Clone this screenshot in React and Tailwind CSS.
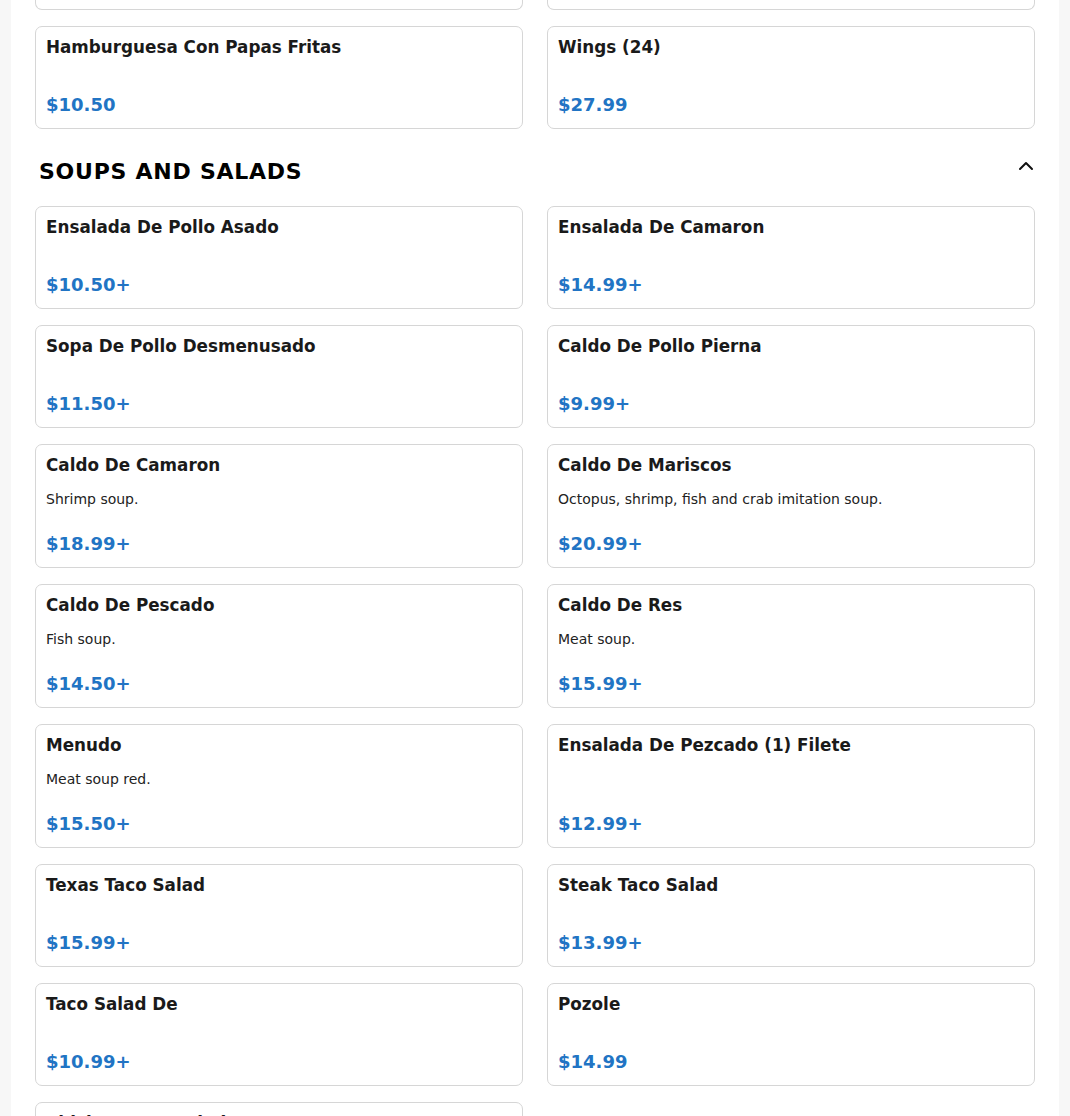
import React from "react";

const FONT = { fontFamily: '"DejaVu Sans", "Liberation Sans", sans-serif' };

const soups = [
  { name: "Ensalada De Pollo Asado", price: "$10.50+" },
  { name: "Ensalada De Camaron", price: "$14.99+" },
  { name: "Sopa De Pollo Desmenusado", price: "$11.50+" },
  { name: "Caldo De Pollo Pierna", price: "$9.99+" },
  { name: "Caldo De Camaron", desc: "Shrimp soup.", price: "$18.99+" },
  { name: "Caldo De Mariscos", desc: "Octopus, shrimp, fish and crab imitation soup.", price: "$20.99+" },
  { name: "Caldo De Pescado", desc: "Fish soup.", price: "$14.50+" },
  { name: "Caldo De Res", desc: "Meat soup.", price: "$15.99+" },
  { name: "Menudo", desc: "Meat soup red.", price: "$15.50+" },
  { name: "Ensalada De Pezcado (1) Filete", price: "$12.99+" },
  { name: "Texas Taco Salad", price: "$15.99+" },
  { name: "Steak Taco Salad", price: "$13.99+" },
  { name: "Taco Salad De", price: "$10.99+" },
  { name: "Pozole", price: "$14.99" },
  { name: "Chicken Taco Salad", price: "$11.99+" },
];

function Card({ item }) {
  return (
    <div className="flex flex-col rounded-[7px] border border-[#d6d6d6] bg-white p-2.5">
      <div className="mb-[14px] text-[16.8px] font-bold leading-[20px] text-[#1a1a1a]">{item.name}</div>
      {item.desc && (
        <div className="text-[14px] leading-[21px] text-[#222222]">{item.desc}</div>
      )}
      <div className="mt-auto pt-5 text-[18px] font-bold leading-[27px] text-[#2174c4]">{item.price}</div>
    </div>
  );
}

function ChevronUp() {
  return (
    <svg width="24" height="24" viewBox="0 0 24 24" fill="none" stroke="#111" strokeWidth="2" strokeLinecap="round" strokeLinejoin="round">
      <path d="M6 15l6-6 6 6" />
    </svg>
  );
}

export default function App() {
  return (
    <div className="min-h-screen bg-[#f7f7f7]" style={FONT}>
      <div className="mx-auto w-[1048px] bg-white px-6 pb-10">
        <div className="grid grid-cols-2 gap-x-6 gap-y-4">
          <div className="h-[10px] rounded-b-[7px] border border-t-0 border-[#d6d6d6]" />
          <div className="h-[10px] rounded-b-[7px] border border-t-0 border-[#d6d6d6]" />
          <Card item={{ name: "Hamburguesa Con Papas Fritas", price: "$10.50" }} />
          <Card item={{ name: "Wings (24)", price: "$27.99" }} />
        </div>

        <div className="mt-[23px] mb-[21px] flex items-start justify-between pl-1">
          <h2 className="mt-[7px] text-[22px] font-bold leading-[26px] tracking-[0.75px] text-black">SOUPS AND SALADS</h2>
          <div className="-mr-[3px] mt-[2px]">
            <ChevronUp />
          </div>
        </div>

        <div className="grid grid-cols-2 gap-x-6 gap-y-4">
          {soups.map((s) => (
            <Card key={s.name} item={s} />
          ))}
        </div>
      </div>
    </div>
  );
}
